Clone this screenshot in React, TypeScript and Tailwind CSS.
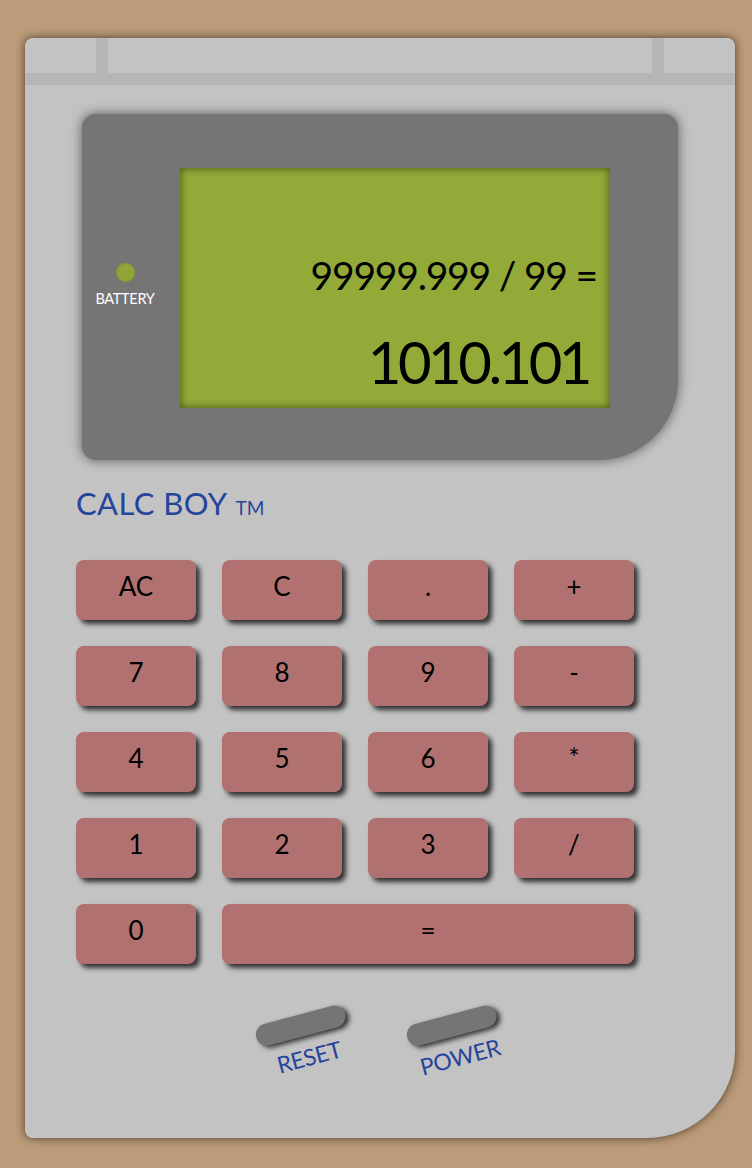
import React from "react";

const keys: { label: string; wide?: boolean }[] = [
  { label: "AC" }, { label: "C" }, { label: "." }, { label: "+" },
  { label: "7" }, { label: "8" }, { label: "9" }, { label: "-" },
  { label: "4" }, { label: "5" }, { label: "6" }, { label: "*" },
  { label: "1" }, { label: "2" }, { label: "3" }, { label: "/" },
  { label: "0" }, { label: "=", wide: true },
];

export default function App() {
  return (
    <div className="min-h-[1168px] w-full bg-[#bb9b7a] pt-[38px] pl-[25px] font-['Lato','Open_Sans',sans-serif]">
      <div className="relative w-[710px] h-[1100px] bg-[#c4c3c4] rounded-t-[8px] rounded-bl-[8px] rounded-br-[88px] shadow-[0_0_10px_rgba(40,25,10,0.75)] overflow-hidden">
        {/* top strip */}
        <div className="flex h-[35px]">
          <div className="w-[71px]" />
          <div className="w-[12px] bg-[#b6b6b6]" />
          <div className="flex-1" />
          <div className="w-[12px] bg-[#b6b6b6]" />
          <div className="w-[71px]" />
        </div>
        <div className="h-[12px] bg-[#b6b6b6]" />

        {/* screen */}
        <div className="ml-[57px] mt-[29px] w-[596px] h-[346px] bg-[#767475] rounded-tl-[14px] rounded-tr-[14px] rounded-bl-[14px] rounded-br-[80px] shadow-[0_0_12px_rgba(0,0,0,0.55)] flex">
          <div className="w-[98px] pr-[12px] flex flex-col items-center pt-[149px]">
            <div className="w-[19px] h-[19px] rounded-full bg-[radial-gradient(circle,#8fa536_55%,#6f8226_100%)]" />
            <div className="mt-[10px] text-[14.5px] leading-none text-white tracking-[-0.3px]">BATTERY</div>
          </div>
          <div className="mt-[54px] w-[430px] h-[240px] bg-[#93aa38] shadow-[inset_0_0_8px_rgba(40,50,0,0.75)] flex flex-col items-end pr-[13px]">
            <div className="mt-[88px] text-[39px] leading-none text-black tracking-[-1.2px] whitespace-pre">99999.999 / 99 =</div>
            <div className="mt-[38px] mr-[8px] text-[58px] leading-none text-black tracking-[-3.5px]">1010.101</div>
          </div>
        </div>

        {/* brand */}
        <div className="ml-[51px] mt-[28px] flex items-baseline text-[#25459a] leading-none">
          <span className="text-[31px] tracking-[0.4px]">CALC BOY</span>
          <span className="ml-[8px] text-[19px]">TM</span>
        </div>

        {/* keypad */}
        <div className="ml-[51px] mt-[41px] grid grid-cols-[repeat(4,120px)] auto-rows-[60px] gap-[26px]">
          {keys.map((k) => (
            <div
              key={k.label}
              className={`${k.wide ? "col-span-3" : ""} bg-[#b07170] rounded-[8px] shadow-[4px_4px_5px_rgba(0,0,0,0.75)] flex items-center justify-center pb-[8px] text-[26px] text-black leading-none`}
            >
              {k.label}
            </div>
          ))}
        </div>

        {/* reset / power */}
        <div className="ml-[230px] mt-[50px] flex gap-[51px]">
          {["RESET", "POWER"].map((l) => (
            <div key={l} className="w-[100px] flex flex-col items-center rotate-[-15deg]">
              <div className="w-[92px] h-[22px] rounded-full bg-[#767474] shadow-[3px_3px_5px_rgba(0,0,0,0.75)]" />
              <div className="mt-[10px] text-[23px] leading-none text-[#25459a] tracking-[-0.3px]">{l}</div>
            </div>
          ))}
        </div>
      </div>
    </div>
  );
}
